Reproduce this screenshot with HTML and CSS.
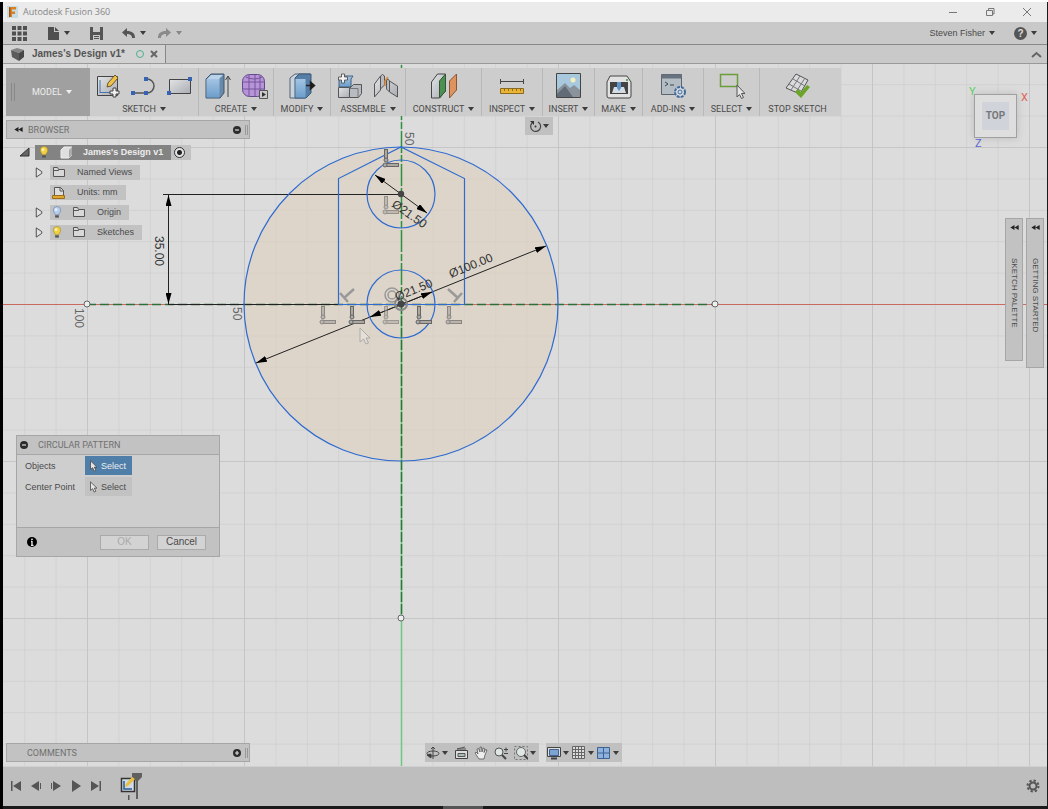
FILE: index.html
```html
<!DOCTYPE html>
<html lang="en">
<head>
<meta charset="utf-8">
<title>Autodesk Fusion 360</title>
<link rel="stylesheet" href="styles.css">
</head>
<body>
<svg class="defs" aria-hidden="true">
  <defs>
    <linearGradient id="steel" x1="0" y1="0" x2="1" y2="1"><stop offset="0" stop-color="#e2e4e6"/><stop offset="1" stop-color="#a9acb2"/></linearGradient>
    <linearGradient id="blue" x1="0" y1="0" x2="0" y2="1"><stop offset="0" stop-color="#a3c4e2"/><stop offset="1" stop-color="#6d9ecb"/></linearGradient>
    <symbol id="folder" viewBox="0 0 14 12"><path d="M1.500 10.500V1.500h4l1 2h6v7zM1.500 4.500h5l1-1" fill="#d8d8d8" stroke="#555" /></symbol>
    <symbol id="bulb-on" viewBox="0 0 10 14"><path d="M3 9.500C3 7.500 1 7 1 4.500a4 4 0 0 1 8 0C9 7 7 7.500 7 9.500z" fill="#f0cf45" stroke="#a58b2b" stroke-width=".7"/><circle cx="4" cy="4" r="1.500" fill="#fff3b0"/><path d="M3 10h4v2.500H3z" fill="#555"/></symbol>
    <symbol id="bulb-off" viewBox="0 0 10 14"><path d="M3 9.500C3 7.500 1 7 1 4.500a4 4 0 0 1 8 0C9 7 7 7.500 7 9.500z" fill="#b7cdec" stroke="#6884ae" stroke-width=".7"/><circle cx="4" cy="4" r="1.500" fill="#e8f0fc"/><path d="M3 10h4v2.500H3z" fill="#555"/></symbol>
    <symbol id="expand" viewBox="0 0 8 12"><path d="M1 1v10l6-4V5z" fill="#e2e2e2" stroke="#444"/></symbol>
    <symbol id="cursor" viewBox="0 0 10 14"><path d="M1.500 1v10l2.500-2 1.700 4 2-1-1.700-3.700H9z" fill="#e6e6e6" stroke="#444" stroke-width=".9"/></symbol>
    <symbol id="rewind" viewBox="0 0 10 6"><path d="M5 0v6L0 3zM10 0v6L5 3z" fill="#222"/></symbol>
    <symbol id="minus-dot" viewBox="0 0 8 8"><circle cx="4" cy="4" r="4" fill="#2c2c2c"/><path d="M2 4h4" stroke="#ddd" stroke-width="1.200"/></symbol>
    <symbol id="plus-dot" viewBox="0 0 8 8"><circle cx="4" cy="4" r="4" fill="#2c2c2c"/><path d="M2 4h4M4 2v4" stroke="#ddd" stroke-width="1.200"/></symbol>
    <g id="snap"><path d="M4 2v12M3 18h14" stroke="#666" stroke-width="4"/><path d="M4 3v10M4 18h12" stroke="#c4bdb3" stroke-width="1.500"/><circle cx="4" cy="13" r="2" fill="#aaa" stroke="#666"/><circle cx="3" cy="18" r="2" fill="#aaa" stroke="#666"/></g>
    <pattern id="minor" x="401" y="304" width="31.400" height="31.400" patternUnits="userSpaceOnUse"><path d="M0 0H31.400M0 0V31.400" stroke="#cecece" stroke-width="1.300" fill="none"/></pattern>
    <pattern id="major" x="401" y="304" width="157" height="157" patternUnits="userSpaceOnUse"><path d="M0 0H157M0 0V157" stroke="#c2c2c2" stroke-width="1.600" fill="none"/></pattern>
    <marker id="arrow" viewBox="0 0 11 6" refX="11" refY="3" markerWidth="11" markerHeight="6" markerUnits="userSpaceOnUse" orient="auto-start-reverse"><path d="M0 0L11 3 0 6z"/></marker>
  </defs>
</svg>

<div class="app">
  <header class="titlebar">
    <svg class="logo" width="11" height="12" viewBox="0 0 11 12"><path d="M0 0h11v12H0z" fill="#c6dce4"/><path d="M2 1h7v2.500H5v2h3V8H5v3H2z" fill="#dc8122"/><path d="M2 1l1.500 1v9H2z" fill="#9d5514"/></svg>
    <h1 class="title">Autodesk Fusion 360</h1>
    <div class="window-buttons">
      <button aria-label="Minimize"><svg width="10" height="10"><path d="M1 5.500h8"/></svg></button>
      <button aria-label="Restore"><svg width="10" height="10"><path d="M1.500 3.500h6v5h-6zM3.500 3.500v-2h5.500v5.500H7.500"/></svg></button>
      <button aria-label="Close"><svg width="10" height="10"><path d="M1 1l8 8M9 1L1 9"/></svg></button>
    </div>
  </header>

  <nav class="quickbar">
    <button class="quick-grid" aria-label="Data panel"><svg width="15" height="15" fill="#505050"><path d="M0 0h4v4H0zM5.500 0h4v4h-4zM11 0h4v4h-4zM0 5.500h4v4H0zM5.500 5.500h4v4h-4zM11 5.500h4v4h-4zM0 11h4v4H0zM5.500 11h4v4h-4zM11 11h4v4h-4z"/></svg></button>
    <button class="quick-file caret" aria-label="File"><svg width="12" height="13" fill="#505050"><path d="M0 0h6v5h5v8H0z"/><path d="M7 0l4 4H7z"/></svg></button>
    <button class="quick-save" aria-label="Save"><svg width="13" height="13"><path d="M0 0h13v13H0z" fill="#555"/><path d="M3 0h7v5H3zM3 8h7v5H3z" fill="#c9c9c9"/><path d="M4 9.500h5M4 11.500h5" stroke="#555"/></svg></button>
    <button class="quick-undo caret" aria-label="Undo"><svg width="14" height="11"><path d="M0 4.500L5 0v3c5 0 8 2 8 7h-3c0-3-2-4-5-4v3z" fill="#555"/></svg></button>
    <button class="quick-redo caret" aria-label="Redo"><svg width="14" height="11"><path d="M13 4.500L8 0v3C3 3 0 5 0 10h3c0-3 2-4 5-4v3z" fill="#8a8a8a"/></svg></button>
    <button class="account caret">Steven Fisher</button>
    <button class="help caret" aria-label="Help"><span class="help-mark">?</span></button>
  </nav>

  <div class="tabbar">
    <div class="doc-tab">
      <svg width="13" height="13"><path d="M0 2l6-2 7 2-5 3z" fill="#858585"/><path d="M0 2l8 3v8L1 9z" fill="#5b5b5b"/><path d="M13 2v7l-5 4V5z" fill="#474747"/></svg>
      <span class="doc-name">James's Design v1*</span>
      <span class="online"></span>
      <button aria-label="Close tab"><svg width="8" height="8"><path d="M1 1l6 6M7 1L1 7" stroke="#666" stroke-width="2"/></svg></button>
    </div>
    <button class="collapse" aria-label="Collapse"><svg width="11" height="7"><path d="M1 6l4.500-4L10 6" fill="none" stroke="#666" stroke-width="2"/></svg></button>
  </div>

  <main class="workspace">
    <svg class="canvas" viewBox="3 64 1044 702" preserveAspectRatio="xMidYMid slice">
      <rect x="-1000" y="-1000" width="3000" height="3000" fill="url(#minor)"/>
      <rect x="-1000" y="-1000" width="3000" height="3000" fill="url(#major)"/>
      <circle cx="401" cy="304" r="157" fill="#ddd0bd" fill-opacity=".6"/>
      <path d="M-1000 304.500H2000" stroke="#c96a60"/>
      <path d="M401.500 304V2000" stroke="#6fc784" stroke-width="1.500"/>
      <path d="M87 304.500H715" stroke="#2f6d3d" stroke-width="1.300" stroke-dasharray="9 4"/>
      <path d="M401.500 -100V304" stroke="#2c9140" stroke-width="1.500" stroke-dasharray="22 2 7 2"/>
      <path d="M401.500 304V618" stroke="#277a38" stroke-width="1.500" stroke-dasharray="10 2"/>
      <g stroke="#222" fill="none">
        <path d="M163 194.500H401M168 304.500H338"/>
        <path d="M168.500 195V304" marker-start="url(#arrow)" marker-end="url(#arrow)"/>
        <path d="M256 363L546 246" marker-start="url(#arrow)" marker-end="url(#arrow)"/>
        <path d="M370 317L432 292" marker-start="url(#arrow)" marker-end="url(#arrow)"/>
        <path d="M375 175L427 213" marker-start="url(#arrow)" marker-end="url(#arrow)"/>
      </g>
      <g stroke="#2f6bd0" stroke-width="1.200" fill="none">
        <circle cx="401" cy="304" r="157"/><circle cx="401" cy="304" r="34"/><circle cx="401" cy="194" r="34"/>
        <path d="M338.500 304.500V178.500L401 147l63.500 31.500v126z"/>
      </g>
      <g fill="none">
        <use href="#snap" x="382" y="147"/>
        <use href="#snap" x="382" y="194" opacity=".6"/>
        <use href="#snap" x="319" y="304" opacity=".7"/><use href="#snap" x="348" y="304"/><use href="#snap" x="382" y="304" opacity=".55"/><use href="#snap" x="415" y="304"/><use href="#snap" x="445" y="304" opacity=".7"/>
        <path d="M354 289l-10 9M340 293l8 9M448 289l10 9M462 293l-8 9" stroke="#999" stroke-width="2.500"/>
        <circle cx="392" cy="295" r="7" stroke="#999" stroke-width="1.500"/><circle cx="392" cy="295" r="4" stroke="#999" stroke-width="1.500"/>
        <circle cx="401" cy="304" r="6" stroke="#888" stroke-width="2"/>
      </g>
      <circle cx="401" cy="304" r="3.500" fill="#444"/><circle cx="401" cy="194" r="3.200" fill="#444"/>
      <g fill="#eee" stroke="#666"><circle cx="87" cy="304" r="3"/><circle cx="715" cy="304" r="3"/><circle cx="401" cy="618" r="3"/></g>
      <path d="M360 328v14l3.500-3 2.500 5 2.500-1-2.500-5h4z" fill="#e5dfd8" stroke="#aaa"/>
      <g class="dim">
        <text transform="translate(451 278) rotate(-22)">Ø100.00</text>
        <text transform="translate(397 301) rotate(-22)">Ø21.50</text>
        <text transform="translate(391 206) rotate(35)">Ø21.50</text>
        <text transform="translate(155 236) rotate(90)">35.00</text>
        <g class="scale"><text transform="translate(405 132) rotate(90)">50</text><text transform="translate(75 308) rotate(90)">100</text><text transform="translate(233 307) rotate(90)">50</text></g>
      </g>
    </svg>

    <div class="toolbar">
      <button class="model caret">MODEL</button>
      <button class="group"><span class="icons">
        <svg width="25" height="26"><path d="M1.500 3.500h20v19h-20z" fill="url(#steel)" stroke="#444"/><path d="M4 20V7M4 19.500h12" stroke="#4674ae" fill="none"/><path d="M11 14l1-4 7-8 3 3-7 8z" fill="#efc34a" stroke="#6b5425"/><path d="M17 15h3v3h3v3h-3v3h-3v-3h-3v-3h3z" fill="#eee" stroke="#444"/></svg>
        <svg width="26" height="20"><path d="M2 17h14a6.500 6.500 0 0 0 0-14" fill="none" stroke="#555" stroke-width="1.500"/><path d="M0 15h4v4H0zM13 15h4v4h-4zM13 1h4v4h-4z" fill="#3663b3"/></svg>
        <svg width="26" height="20"><path d="M2.500 3.500h21v14h-21z" fill="url(#steel)" stroke="#444"/><path d="M0 15h4v4H0zM21 1h4v4h-4z" fill="#3663b3"/></svg>
      </span><span class="caret">SKETCH</span></button>
      <button class="group"><span class="icons">
        <svg width="26" height="26"><path d="M1 6l5-5h13v19l-4 5H1z" fill="#688aaa" stroke="#3e546a"/><path d="M1.500 6h13v18.500h-13z" fill="url(#blue)"/><path d="M2 6l4-4h12l-4 4z" fill="#bad3e8"/><path d="M23 24V4M20.500 7L23 3l2.500 4" stroke="#444" fill="none"/></svg>
        <svg width="27" height="27"><rect x="1.500" y="1.500" width="22" height="22" rx="7" fill="#b794d8" stroke="#65488b"/><path d="M2 9h21M2 16h21M8 2v21M14 2v21M19 3v20M5 4q8 4 16 0" stroke="#75549a" fill="none"/><path d="M18.500 17.500h8v8h-8z" fill="#ccc" stroke="#555"/><path d="M21 19l4 2.500-4 2.500z" fill="#333"/></svg>
      </span><span class="caret">CREATE</span></button>
      <button class="group"><span class="icons"><svg width="27" height="26"><path d="M1 5l5-4h15v19l-5 5H1z" fill="#cbd3da" stroke="#526477"/><path d="M6 5l4-4h12v19l-5 5H6z" fill="#567ea7" stroke="#3c5877"/><path d="M6.500 6h10v18.500h-10z" fill="url(#blue)"/><path d="M17 12.500h7M21.500 9l4 3.500-4 3.500z" stroke="#222" stroke-width="1.500"/></svg></span><span class="caret">MODIFY</span></button>
      <button class="group"><span class="icons">
        <svg width="26" height="26"><path d="M2 6l3-3h11l-2 3v8H2z" fill="url(#blue)" stroke="#42607f"/><path d="M1.500 14.500h11v10h-11z" fill="url(#steel)" stroke="#555"/><path d="M12.500 15.500l4-4h8v9l-3 4h-9z" fill="#b8bbc2" stroke="#555"/><path d="M13 15.500h8v9" fill="none" stroke="#777"/><path d="M4.500 1h3v3h3v3h-3v3h-3V7h-3V4h3z" fill="#f3f3f3" stroke="#444" stroke-width=".8"/></svg>
        <svg width="26" height="26"><path d="M1.500 11l6-8v14l-6 7zM16.500 8l8 5v11l-8-5z" fill="url(#steel)" stroke="#555"/><path d="M7.500 3q2-3 4 0v9l-4 4zM16.500 8q-1-3-3-1v9l3 3z" fill="#b9bcc1" stroke="#555"/><path d="M15 4l-3 4v5" fill="none" stroke="#d8883a" stroke-width="1.500"/></svg>
      </span><span class="caret">ASSEMBLE</span></button>
      <button class="group"><span class="icons"><svg width="28" height="26"><path d="M1.500 9l6-8h8v17l-6 7h-8z" fill="url(#steel)" stroke="#444"/><path d="M9.500 8l6-7v17l-6 7z" fill="#4c9151" stroke="#345437"/><path d="M19.500 8l7-7v16l-7 8z" fill="#df935f" stroke="#8a5636"/></svg></span><span class="caret">CONSTRUCT</span></button>
      <button class="group"><span class="icons"><svg width="26" height="26"><path d="M1.500 6v5M24.500 6v5M2 8.500h22" stroke="#444"/><path d="M1.500 15.500h23v5h-23z" fill="#e9b532" stroke="#8a6920"/><path d="M5.500 16v2M9.500 16v2M13.500 16v2M17.500 16v2M21.500 16v2" stroke="#8a6920"/></svg></span><span class="caret">INSPECT</span></button>
      <button class="group"><span class="icons"><svg width="26" height="26"><path d="M.5.5h24v24H.5z" fill="#a8c9dd" stroke="#444"/><circle cx="17" cy="7" r="2.500" fill="#f4efbd"/><path d="M1 17l8-7 5 5 4-3 6 5v7H1z" fill="#8a929c"/><path d="M1 21l8-8 8 11H1z" fill="#626c78"/></svg></span><span class="caret">INSERT</span></button>
      <button class="group"><span class="icons"><svg width="26" height="26"><path d="M1 23V9l3-6h17l4 6v14q0 2-2 2H3q-2 0-2-2z" fill="#e2e2e2" stroke="#444"/><path d="M4 9h18v12H4z" fill="#444"/><path d="M6 20l2-6h10l2 6z" fill="#d4dce3"/><path d="M11 9h4v6l-2 3-2-3z" fill="#5d93cb"/><circle cx="21" cy="7" r="1" fill="#279143"/></svg></span><span class="caret">MAKE</span></button>
      <button class="group"><span class="icons"><svg width="27" height="26"><path d="M1.500 1.500h20v20h-20z" fill="#b4bcc4" stroke="#5b6570"/><path d="M1.500 1.500h20v4h-20z" fill="#67727e"/><path d="M5 9l3 2-3 2M10 12h4" stroke="#384859" fill="none"/><circle cx="20" cy="19" r="5" fill="#d4dce5" stroke="#456a9a" stroke-width="2" stroke-dasharray="3 1"/><circle cx="20" cy="19" r="2" fill="none" stroke="#456a9a"/></svg></span><span class="caret">ADD-INS</span></button>
      <button class="group"><span class="icons"><svg width="26" height="26"><path d="M1.500 1.500h17v12h-17z" fill="none" stroke="#6b9d39" stroke-width="1.500"/><path d="M18 12v12l2.500-2.500 2 4 2-1-2-4H26z" fill="#e5e5e5" stroke="#555"/></svg></span><span class="caret">SELECT</span></button>
      <button class="group stop"><span class="icons"><svg width="26" height="26"><path d="M1 15L11 1l12 6-8 14z" fill="#d9dadd" stroke="#555"/><path d="M4 11l12 7M8 6l12 7M6 17l9-14M11 19l9-14" stroke="#777"/><path d="M10 19l3-3 3 3 6-7 3 2-9 11z" fill="#6aa528"/></svg></span><span>STOP SKETCH</span></button>
    </div>

    <button class="repeat caret" aria-label="Repeat"><svg width="13" height="13"><path d="M3 3a5 5 0 1 0 6-1" fill="none" stroke="#444" stroke-width="1.200"/><path d="M1 1l4 0v4z" fill="#333"/><circle cx="6.500" cy="6.500" r="1" fill="#333"/></svg></button>

    <section class="browser">
      <h2 class="panel-head"><svg width="9" height="5"><use href="#rewind"/></svg><span>BROWSER</span><svg class="dot" width="8" height="8"><use href="#minus-dot"/></svg><i class="grip"></i></h2>
      <ul class="tree">
        <li><svg width="11" height="10"><path d="M10 1v8H1z" fill="#666" stroke="#333"/></svg><span class="chip root"><svg width="10" height="13"><use href="#bulb-on"/></svg><svg width="12" height="13"><path d="M1 4l3-3h8v8l-3 3H1z" fill="#dfdfdf" stroke="#eee"/><path d="M9 4l3-3v8l-3 3z" fill="#aaa"/></svg><b>James's Design v1</b></span><label class="chip activate"><input type="radio" checked aria-label="Activate component"></label></li>
        <li class="child"><svg width="8" height="11"><use href="#expand"/></svg><span class="chip"><svg width="14" height="12"><use href="#folder"/></svg><span>Named Views</span></span></li>
        <li class="child leaf"><span class="chip"><svg width="14" height="13"><path d="M2.500 10V1.500h6l3 3V10z" fill="#ddd" stroke="#555"/><path d="M8 1v4h4" fill="none" stroke="#555"/><path d="M.5 9.500h12v3H.5z" fill="#dfa62f" stroke="#9b6e1b"/></svg><span>Units: mm</span></span></li>
        <li class="child"><svg width="8" height="11"><use href="#expand"/></svg><span class="chip"><svg width="10" height="13"><use href="#bulb-off"/></svg><svg width="14" height="12"><use href="#folder"/></svg><span>Origin</span></span></li>
        <li class="child"><svg width="8" height="11"><use href="#expand"/></svg><span class="chip"><svg width="10" height="13"><use href="#bulb-on"/></svg><svg width="14" height="12"><use href="#folder"/></svg><span>Sketches</span></span></li>
      </ul>
    </section>

    <div class="viewcube"><span class="face">TOP</span><span class="axis x">X</span><span class="axis y">Y</span><span class="axis z">Z</span></div>

    <div class="side-tabs">
      <button><svg width="9" height="5"><use href="#rewind"/></svg><span>SKETCH PALETTE</span></button>
      <button class="tall"><svg width="9" height="5"><use href="#rewind"/></svg><span>GETTING STARTED</span></button>
    </div>

    <form class="dialog">
      <h2><svg width="8" height="8"><use href="#minus-dot"/></svg>CIRCULAR PATTERN</h2>
      <div class="fields">
        <label for="objects">Objects</label><button type="button" id="objects" class="pick active"><svg width="9" height="12"><use href="#cursor"/></svg>Select</button>
        <label for="center">Center Point</label><button type="button" id="center" class="pick"><svg width="9" height="12"><use href="#cursor"/></svg>Select</button>
      </div>
      <div class="actions"><svg width="10" height="10"><circle cx="5" cy="5" r="5"/><path d="M5 4v4M4 8.300h2.500M4 4.500h1" stroke="#eee" stroke-width="1.300"/><circle cx="5" cy="2.300" r=".9" fill="#eee"/></svg><button type="button" disabled>OK</button><button type="button">Cancel</button></div>
    </form>

    <div class="bottom">
      <h2 class="panel-head"><span>COMMENTS</span><svg class="dot" width="8" height="8"><use href="#plus-dot"/></svg><i class="grip"></i></h2>
      <div class="navbar">
        <button class="caret" aria-label="Orbit"><svg width="14" height="14" fill="none" stroke="#444"><path d="M7 1v12M5 3l2-2 2 2"/><ellipse cx="7" cy="7.500" rx="6" ry="2.500"/><path d="M1 9l4-1v4z" fill="#333"/></svg></button>
        <button aria-label="Look at"><svg width="14" height="14"><path d="M1.500 4.500h12v8h-12z" fill="#ddd" stroke="#444"/><path d="M4 7.500h7v3H4z" fill="#aabeb2" stroke="#555"/><path d="M3 3l8-2M3 3h9" stroke="#555"/></svg></button>
        <button aria-label="Pan"><svg width="14" height="14"><path d="M5 13L1 7l1-1 2 2-1-5 1.500-.5L6 6V1h1.500l.5 5 1-4 1.500.5-.5 4 1.500-3 1.500.5-2 5-1 4z" fill="#eee" stroke="#555" stroke-width=".8"/></svg></button>
        <button aria-label="Zoom"><svg width="14" height="14"><circle cx="5" cy="6" r="4" fill="#dfe6e6" stroke="#555"/><path d="M8 9l4 4" stroke="#444" stroke-width="2"/><path d="M10 3.500h4M12 1.500v4M10 7.500h4" stroke="#444"/></svg></button>
        <button class="caret" aria-label="Fit"><svg width="14" height="14"><path d="M.5.5h13v13H.5z" fill="none" stroke="#777" stroke-dasharray="2 2"/><circle cx="7" cy="6" r="4.500" fill="#dfe6e6" stroke="#666"/><path d="M10 9l4 4" stroke="#444" stroke-width="2"/></svg></button>
      </div>
      <div class="navbar display">
        <button class="caret" aria-label="Display settings"><svg width="14" height="14"><path d="M.5 1.500h13v9H.5z" fill="#ddd" stroke="#444"/><path d="M2.500 3.500h9v6h-9z" fill="#7ba4d3" stroke="#426390"/><path d="M4 12.500h6" stroke="#444" stroke-width="2"/></svg></button>
        <button class="caret" aria-label="Grid settings"><svg width="14" height="14"><path d="M.5.5h12v12H.5zM3.500 0v13M6.500 0v13M9.500 0v13M0 3.500h13M0 6.500h13M0 9.500h13" fill="#ddd" stroke="#666"/></svg></button>
        <button class="caret" aria-label="Viewports"><svg width="14" height="14"><path d="M.5 1.500h12v11H.5zM6.500 1v12M0 7h13" fill="#8fb2dc" stroke="#3e6291"/></svg></button>
      </div>
    </div>
  </main>

  <footer class="timeline">
    <button aria-label="Go to start"><svg width="12" height="12"><path d="M1 1h1.500v10H1zM11 1v10L3 6z"/></svg></button>
    <button aria-label="Step back"><svg width="12" height="12"><path d="M9 1v10L1 6zM10 3h1v6h-1z"/></svg></button>
    <button aria-label="Step forward"><svg width="12" height="12"><path d="M3 1v10l8-5zM1 3h1v6H1z"/></svg></button>
    <button aria-label="Play"><svg width="12" height="12"><path d="M2 0v12l9-6z"/></svg></button>
    <button aria-label="Go to end"><svg width="12" height="12"><path d="M1 1v10l8-5zM9.500 1H11v10H9.500z"/></svg></button>
    <button class="feature" aria-label="Sketch feature"><svg width="23" height="28"><path d="M1.500 6.500h13v13h-13z" fill="#d0dbe6" stroke="#333" stroke-width="1.500"/><path d="M4 9v8h8" fill="none" stroke="#285a94" stroke-width="1.500"/><path d="M12 1h10v4l-4 4v18h-2V9l-4-4z" fill="#606060"/><path d="M5 15l1-3 6-7 3 2-7 7z" fill="#eac03d"/><path d="M8 23h1.500v5H8z"/></svg></button>
    <button class="settings" aria-label="Timeline settings"><svg width="14" height="14"><circle cx="7" cy="7" r="5.500" fill="none" stroke="#555" stroke-width="2" stroke-dasharray="2.300 2"/><circle cx="7" cy="7" r="3.500" fill="none" stroke="#555" stroke-width="2"/></svg></button>
  </footer>
</div>
</body>
</html>
```

FILE: styles.css
```css
* { box-sizing: border-box; }

body {
  margin: 0;
  background: #fff;
  color: #4a4a4a;
  font: 9px/12px "Liberation Sans", Arial, sans-serif;
}

h1, h2, ul { margin: 0; padding: 0; font: inherit; list-style: none; }
svg { display: block; flex: none; }
.defs { position: absolute; width: 0; height: 0; }

button {
  display: flex;
  align-items: center;
  padding: 0;
  border: 0;
  background: none;
  color: inherit;
  font: inherit;
}

.caret { display: flex; align-items: center; }
.caret::after {
  content: "";
  flex: none;
  margin-left: 4px;
  border: solid transparent;
  border-width: 4px 3px 0;
  border-top-color: #3c3c3c;
}

.app {
  display: flex;
  flex-direction: column;
  height: 100vh;
  border-top: 2px solid #fff;
  background: linear-gradient(#000, #000) left / 3px 100% no-repeat,
    linear-gradient(#555, #555) 443px 100% / 40px 3px no-repeat, #1a1a1a;
  padding: 0 1px 3px 3px;
}

/* Window chrome */
.titlebar { display: flex; align-items: center; height: 20px; padding: 0 15px 0 4px; background: #ebebeb; }
.title { margin-left: 5px; color: #858585; font: 9px/14px "Open Sans", sans-serif; }
.window-buttons { display: flex; gap: 27px; margin-left: auto; }
.window-buttons svg { fill: none; stroke: #777; }

.quickbar { display: flex; align-items: center; height: 23px; padding: 0 10px 0 9px; background: #c9c9c9; border-bottom: 1px solid #888; }
.quick-file { margin-left: 21px; }
.quick-save { margin-left: 20px; }
.quick-undo { margin-left: 19px; }
.quick-redo { margin-left: 12px; }
.quick-redo::after { border-top-color: #888; }
.account { margin-left: auto; }
.help { margin-left: 19px; }
.help-mark { width: 13px; height: 13px; border-radius: 50%; background: #555; color: #ddd; font-weight: bold; font-size: 10px; line-height: 13px; text-align: center; }

.tabbar { display: flex; align-items: center; justify-content: space-between; height: 19px; padding-right: 5px; background: #c9c9c9; border-bottom: 1px solid #999; }
.doc-tab { display: flex; align-items: center; align-self: stretch; width: 163px; padding-left: 8px; background: #d2d2d2; border-right: 1px solid #888; }
.doc-name { margin-left: 8px; font-weight: bold; font-size: 10px; color: #555; }
.online { width: 8px; height: 8px; margin: 0 6px 0 11px; border: 1px solid #4fae92; border-radius: 50%; }

/* Workspace */
.workspace { position: relative; display: flex; flex-direction: column; flex: 1; min-height: 0; overflow: hidden; background: #dcdcdc; }
.workspace > * { position: relative; }
.workspace > .canvas { position: absolute; inset: 0; width: 100%; height: 100%; }
.dim { fill: #333; font-size: 12px; }
.scale { fill: #666; }

.toolbar {
  display: grid;
  grid-template-columns: 84px 109px 75px 57px 75px 76px 61px 52px 48px 61px 56px 81px;
  align-self: flex-start;
  height: 48px;
  margin: 4px 0 0 3px;
  background: #cdcdcd;
  font-family: Roboto, sans-serif;
}
.model { padding-left: 26px; background: linear-gradient(#888, #888) 5px 50% / 1px 18px no-repeat, linear-gradient(#888, #888) 8px 50% / 1px 18px no-repeat, #a0a0a0; color: #eee; }
.model::after { border-top-color: #eee; }
.group { flex-direction: column; justify-content: flex-end; padding-bottom: 1px; border-right: 1px solid #b8b8b8; }
.group.stop { padding-right: 6px; border: 0; }
.icons { display: flex; align-items: center; gap: 10px; height: 30px; margin-bottom: 2px; }

.repeat.caret { position: absolute; top: 53px; left: 50%; width: 28px; height: 18px; padding-left: 4px; background: #c0c0c0; }
.repeat::after { margin-left: 1px; }

.panel-head { display: flex; align-items: center; width: 244px; height: 19px; padding: 0 1px 0 7px; border: 1px solid #a6a6a6; background: #c2c2c2; color: #707070; font-family: Roboto, sans-serif; }
.panel-head span { margin-left: 5px; }
.panel-head .dot { margin-left: auto; }
.grip { width: 3px; height: 10px; margin-left: 4px; border: solid #999; border-width: 0 1px; }

.browser { margin: 4px 0 0 3px; }
.tree { display: flex; flex-direction: column; gap: 4px; padding-top: 5px; }
.tree li { display: flex; align-items: center; height: 16px; padding-left: 13px; }
.tree .child { padding-left: 29px; }
.tree .leaf { padding-left: 44px; }
.chip { display: flex; align-items: center; gap: 10px; height: 15px; margin-left: 7px; padding: 0 8px 0 2px; background: #c2c2c2; }
.leaf .chip { margin-left: 0; }
.chip > span { margin-left: 1px; }
.chip.root { margin-left: 5px; padding-left: 4px; gap: 11px; background: #838383; color: #eee; }
.chip.activate { margin: 0; padding: 0 6px 0 3px; }
.activate input { appearance: none; width: 11px; height: 11px; margin: 0; border: 1px solid #333; border-radius: 50%; background: radial-gradient(#222 0 2px, #e4e4e4 3px); }

.workspace > .viewcube { position: absolute; top: 30px; right: 30px; display: grid; place-items: center; width: 43px; height: 44px; border: 1px solid #a0a0a0; background: #dedede; box-shadow: 0 0 8px #bbb; }
.face { padding: 8px 4px; background: #d0d3da; color: #777; font: bold 10px/12px Roboto, sans-serif; }
.axis { position: absolute; font: 11px/12px Roboto, sans-serif; }
.axis.x { left: 46px; top: -3px; color: #df6258; }
.axis.y { left: -6px; top: -9px; color: #5dce62; }
.axis.z { left: 0; top: 43px; color: #5d63d8; }

.workspace > .side-tabs { position: absolute; top: 154px; right: 3px; display: flex; align-items: flex-start; gap: 3px; }
.side-tabs button { flex-direction: column; width: 18px; height: 143px; padding-top: 6px; border: 1px solid #a6a6a6; background: #c2c2c2; }
.side-tabs .tall { height: 150px; }
.side-tabs span { margin-top: 28px; writing-mode: vertical-rl; white-space: nowrap; font-size: 8px; }

.workspace > .dialog { position: absolute; left: 13px; top: 371px; width: 204px; border: 1px solid #a6a6a6; background: #cecece; }
.dialog h2 { display: flex; align-items: center; gap: 10px; height: 19px; padding-left: 3px; border-bottom: 1px solid #a6a6a6; background: #c2c2c2; color: #707070; font-family: Roboto, sans-serif; }
.fields { display: grid; grid-template-columns: 60px 47px; grid-auto-rows: 19px; row-gap: 2px; align-items: center; align-content: start; height: 72px; padding: 1px 8px; }
.pick { height: 19px; gap: 3px; padding-left: 4px; background: #c2c2c2; }
.pick.active { background: #4f7ea9; color: #eee; }
.actions { display: flex; align-items: center; gap: 8px; height: 29px; padding: 0 13px 0 10px; border-top: 1px solid #a6a6a6; background: #c2c2c2; }
.actions svg { margin-right: auto; }
.actions button { justify-content: center; width: 49px; height: 15px; border: 1px solid #aaa; background: #d3d3d3; font-size: 10px; }
.actions button:disabled { color: #aaa; }

.bottom { display: flex; align-items: center; margin: auto 0 4px 3px; }
.bottom .panel-head { padding-left: 15px; }
.navbar { display: flex; align-items: center; gap: 6px; height: 19px; margin-left: 175px; padding: 0 3px 0 1px; background: #c0c0c0; }
.navbar .caret::after { margin-left: 2px; }
.navbar.display { gap: 3px; margin-left: 7px; }

.timeline { display: flex; align-items: center; gap: 8px; height: 40px; padding: 0 7px 2px 7px; background: #bebebe; border-top: 1px solid #d0d0d0; }
.timeline svg { fill: #555; }
.feature { margin-left: 10px; }
.settings { margin-left: auto; }
```
